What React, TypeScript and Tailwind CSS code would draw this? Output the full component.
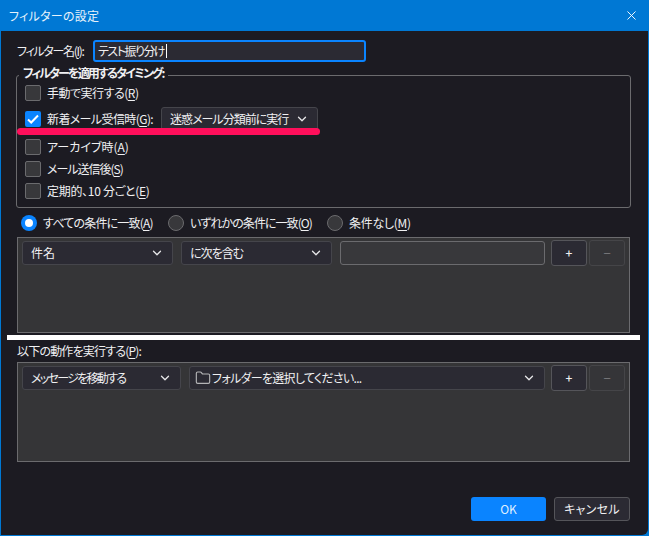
import React from "react";
import { ChevronDown, Folder, X } from "lucide-react";

// label text with the access key underlined, e.g. (R)
function Label({ text, accel, tail = "", track = "" }: { text: string; accel: string; tail?: string; track?: string }) {
  return (
    <span className={`whitespace-nowrap ${track}`}>
      {text}(<span className="underline underline-offset-2">{accel}</span>){tail}
    </span>
  );
}

function Check({ checked = false, text, accel, tail, track }: { checked?: boolean; text: string; accel: string; tail?: string; track?: string }) {
  return (
    <div className="flex items-center gap-[6px]">
      {checked ? (
        <div className="flex h-4 w-4 items-center justify-center rounded-[2px] bg-[#0a84ff]">
          <svg viewBox="0 0 16 16" className="h-4 w-4" fill="none" stroke="#fff" strokeWidth="2">
            <path d="M3 8.5l3.2 3L13 4.5" />
          </svg>
        </div>
      ) : (
        <div className="h-4 w-4 rounded-[2px] border border-[#6b6b6e] bg-[#38383b]" />
      )}
      <Label text={text} accel={accel} tail={tail} track={track} />
    </div>
  );
}

function Radio({ checked = false, text, accel, className = "", track }: { checked?: boolean; text: string; accel: string; className?: string; track?: string }) {
  return (
    <div className={`flex items-center gap-[6px] ${className}`}>
      {checked ? (
        <div className="flex h-4 w-4 items-center justify-center rounded-full bg-[#0a84ff]">
          <div className="h-2 w-2 rounded-full bg-white" />
        </div>
      ) : (
        <div className="h-4 w-4 rounded-full border border-[#6b6b6e] bg-[#38383b]" />
      )}
      <Label text={text} accel={accel} track={track} />
    </div>
  );
}

function Select({ text, className = "", icon = false, track = "" }: { text: string; className?: string; icon?: boolean; track?: string }) {
  return (
    <div className={`flex h-6 shrink-0 items-center justify-between rounded-[3px] border border-[#45454b] bg-[#2b2a33] pl-2 pr-[8px] ${className}`}>
      <span className={`flex items-center whitespace-nowrap ${track}`}>
        {icon && <Folder size={16} strokeWidth={1.7} className="mr-[1px] text-[#b4b4b6]" />}
        {text}
      </span>
      <ChevronDown size={14} strokeWidth={2.2} className="text-[#e8e8ea]" />
    </div>
  );
}

function PlusMinus() {
  return (
    <div className="ml-[6px] flex gap-[2px]">
      <div className="flex h-[26px] w-9 items-center justify-center rounded-[3px] border border-[#55555a] bg-[#2b2a33] text-[12px] font-medium">+</div>
      <div className="flex h-[26px] w-9 items-center justify-center rounded-[3px] border border-[#454548] bg-[#353538] text-[13px] text-[#77777a]">−</div>
    </div>
  );
}

export default function App() {
  return (
    <div
      className="relative flex h-[536px] w-[649px] flex-col overflow-hidden bg-[#0078d4] text-[12px] leading-4 text-[#f0f0f2] [font-feature-settings:'palt']"
      style={{ fontFamily: '"Noto Sans CJK JP", "Noto Sans", sans-serif' }}
    >
      {/* title bar */}
      <div className="flex h-[31px] shrink-0 items-center justify-between pl-[9px] pr-[10px] text-[#e6f2fb]">
        <span className="tracking-[0.25px]">フィルターの設定</span>
        <X size={15} strokeWidth={1.5} className="text-white" />
      </div>

      <div className="mx-px mb-px flex min-h-0 flex-1 flex-col rounded-br-[6px] bg-[#1c1b22] pl-[15px] pr-[17px]">
        {/* filter name */}
        <div className="mt-[9px] flex items-center">
          <div className="w-[77px] shrink-0 pl-px"><Label text="フィルター名" accel="I" tail=":" track="tracking-[-1.3px]" /></div>
          <div className="flex h-[22px] w-[273px] items-center rounded-[3px] border-2 border-[#0a84ff] bg-[#2b2a33] pl-[3px] tracking-[-1.5px]">
            テスト振り分け<span className="ml-[2px] h-[14px] w-px bg-white" />
          </div>
        </div>

        {/* timing group */}
        <div className="relative mt-[13px] flex h-[133px] flex-col gap-[5px] rounded-[3px] border border-[#6b6b6e] pl-2 pt-[9px]">
          <div className="absolute left-[2px] top-[-11px] bg-[#1c1b22] px-[4px] font-bold tracking-[-1.85px]">フィルターを適用するタイミング:</div>
          <Check text="手動で実行する" accel="R" track="tracking-[-0.5px]" />
          <div className="mt-px flex h-6 items-center">
            <Check checked text="新着メール受信時" accel="G" tail=":" track="tracking-[-0.6px]" />
            <Select text="迷惑メール分類前に実行" className="ml-[8px] w-[157px]" track="tracking-[-1px]" />
          </div>
          <div className="mt-[3px]"><Check text="アーカイブ時" accel="A" /></div>
          <div className="mt-[1px]"><Check text="メール送信後" accel="S" track="tracking-[-1px]" /></div>
          <div className="mt-[1px]"><Check text="定期的、10 分ごと" accel="E" track="tracking-[-0.3px]" /></div>
        </div>

        {/* match mode */}
        <div className="ml-[5px] mt-[7px] flex h-4 items-center">
          <Radio checked text="すべての条件に一致" accel="A" className="w-[147px]" track="tracking-[-0.8px]" />
          <Radio text="いずれかの条件に一致" accel="O" className="w-[159px]" track="tracking-[-0.95px]" />
          <Radio text="条件なし" accel="M" track="tracking-[-0.3px]" />
        </div>

        <div className="ml-px mt-[6px] h-[96px] w-[613px] border border-[#6b6b6e] bg-[#353537] pl-1 pt-[2px]">
          <div className="flex items-start">
            <Select text="件名" className="mt-px w-[151px]" />
            <Select text="に次を含む" className="ml-2 mt-px w-[151px]" track="tracking-[-1px]" />
            <div className="ml-2 mt-px h-6 w-[205px] rounded-[3px] border border-[#6b6b6e] bg-[#38383b]" />
            <PlusMinus />
          </div>
        </div>

        <div className="ml-[-9px] mt-[2px] h-[5px] w-[633px] shrink-0 bg-white" />

        <div className="ml-px mt-[3px]"><Label text="以下の動作を実行する" accel="P" tail=":" track="tracking-[-0.8px]" /></div>

        <div className="ml-px mt-[3px] h-[100px] w-[613px] border border-[#6b6b6e] bg-[#353537] pl-1 pt-[2px]">
          <div className="flex items-start">
            <Select text="メッセージを移動する" className="mt-px w-[159px]" track="tracking-[-1.7px]" />
            <Select icon text="フォルダーを選択してください..." className="ml-2 mt-px w-[356px] pl-[5px]" track="tracking-[-0.7px]" />
            <PlusMinus />
          </div>
        </div>

        {/* dialog buttons */}
        <div className="mt-[35px] flex w-[614px] justify-end gap-2">
          <div className="flex h-6 w-[75px] items-center justify-center rounded-[3px] bg-[#0a84ff] text-[#dfefff]">OK</div>
          <div className="flex h-6 w-[76px] items-center justify-center rounded-[3px] border border-[#55555a] bg-[#2b2a33] tracking-[0.3px]">キャンセル</div>
        </div>
      </div>

      {/* red marker line drawn over the screenshot */}
      <div className="absolute left-[17px] top-[128px] h-[7px] w-[303px] rounded-full bg-[#ff0f5b]" />
    </div>
  );
}
